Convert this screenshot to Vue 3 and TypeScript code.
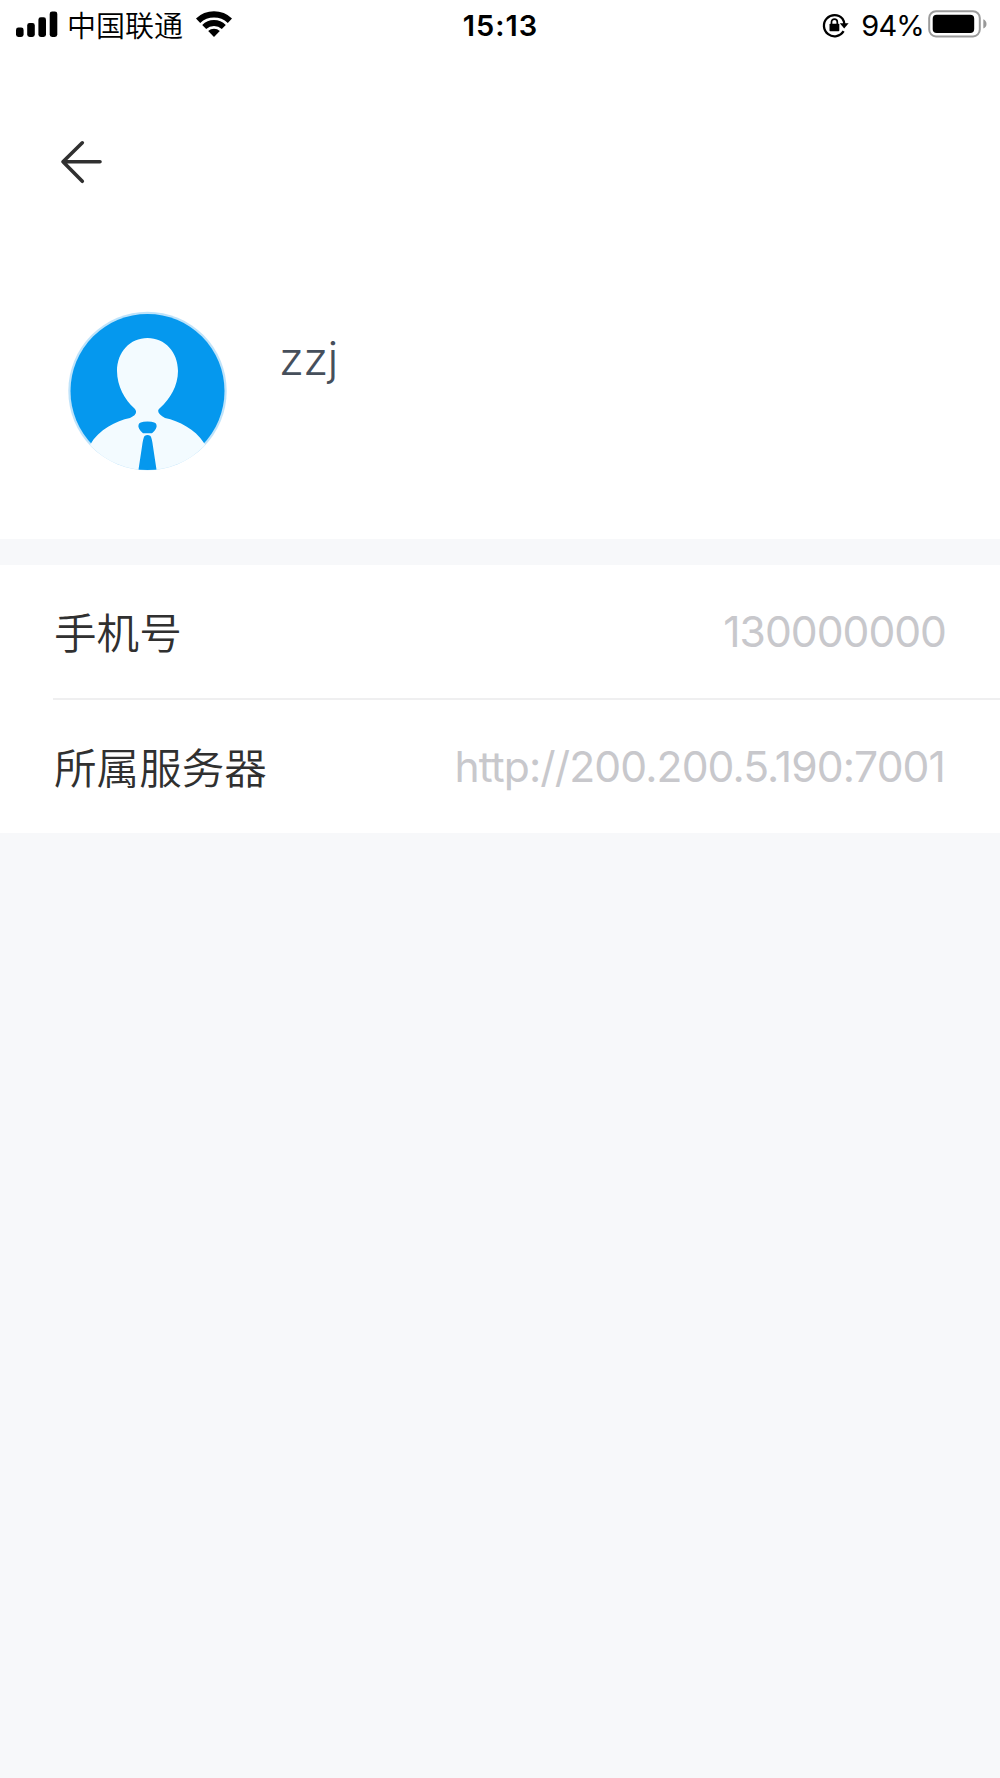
<script setup lang="ts">
interface InfoRow {
  key: string
  label: string
  value: string
}

const carrier = '中国联通'
const time = '15:13'
const battery = '94%'
const userName = 'zzj'

const rows: InfoRow[] = [
  { key: 'phone', label: '手机号', value: '130000000' },
  { key: 'server', label: '所属服务器', value: 'http://200.200.5.190:7001' },
]
</script>

<template>
  <div class="page">
    <header class="status">
      <div class="status-left">
        <svg class="signal" width="42" height="27" viewBox="0 0 42 27">
          <rect x="0" y="16.5" width="7.6" height="9.5" rx="2.4" />
          <rect x="11.2" y="12" width="7.6" height="14" rx="2.4" />
          <rect x="22.4" y="6.3" width="7.6" height="19.7" rx="2.4" />
          <rect x="33.7" y="0.5" width="7.6" height="25.5" rx="2.4" />
        </svg>
        <span class="carrier">{{ carrier }}</span>
        <svg class="wifi" width="38" height="28" viewBox="0 0 38 28">
          <path d="M1 8.6A25.5 25.5 0 0 1 37 8.6L32.8 12.9A20 20 0 0 0 5.2 12.9Z" />
          <path d="M7.2 14.9A16.8 16.8 0 0 1 30.8 14.9L26.8 19A11.6 11.6 0 0 0 11.2 19Z" />
          <path d="M13.2 21A8.3 8.3 0 0 1 24.8 21L19 27Z" />
        </svg>
      </div>
      <span class="time">{{ time }}</span>
      <div class="status-right">
        <svg class="lock" width="27" height="26" viewBox="0 0 27 26">
          <path d="M21.6 18.2A10.6 10.6 0 1 1 20.5 5.7Q22.3 8 22.3 11.5" fill="none" stroke="#000" stroke-width="2.3" />
          <path d="M17.8 10.2H26.6L22.2 15.4Z" />
          <rect x="7.5" y="10.8" width="9.8" height="7.4" rx="0.8" />
          <path d="M9.5 11.5V9a2.9 2.9 0 0 1 5.8 0V11.5" fill="none" stroke="#000" stroke-width="1.7" />
        </svg>
        <span class="percent">{{ battery }}</span>
        <svg class="battery" width="60" height="28" viewBox="0 0 60 28">
          <rect x="1.2" y="1.2" width="50.6" height="25.2" rx="6.8" fill="none" stroke="#9b9b9b" stroke-width="2" />
          <rect x="4.7" y="4.8" width="41.5" height="18.2" rx="4" />
          <path d="M55.3 9.3Q58.5 10.8 58.5 13.9T55.3 18.6Z" fill="#999" />
        </svg>
      </div>
    </header>

    <nav class="nav">
      <svg class="back" width="42" height="44" viewBox="0 0 42 44">
        <path d="M22.3 2.8L3 21.8L22.3 41.3M3 21.8H40" fill="none" stroke="#303030" stroke-width="3.6" stroke-linecap="round" stroke-linejoin="round" />
      </svg>
    </nav>

    <section class="profile">
      <svg class="avatar" width="160" height="160" viewBox="0 0 160 160">
        <defs>
          <clipPath id="avatar-clip"><circle cx="79.5" cy="80" r="79" /></clipPath>
        </defs>
        <circle cx="79.5" cy="80" r="79.2" fill="#bfe3fa" />
        <circle cx="79.5" cy="80" r="77" fill="#0598ee" />
        <g clip-path="url(#avatar-clip)" fill="#f3fbff">
          <path d="M79.5 27C62 27 49 41 49 60C49 75 57 89 66 97C70 101 68 104 62 107C48 110 31 118 22 134L12 150V164H148V150L136 132C127 118 111 110 97 107C91 104 88 100 92 97C102 88 110 75 110 60C110 41 97 27 79.5 27Z" />
          <path d="M70.5 114Q70.5 110.5 79.5 110.5T88.5 114Q89.5 117.5 84 122.3H75Q69.5 117.5 70.5 114Z" fill="#0598ee" />
          <path d="M76.5 125Q79.5 123 82.5 125Q84 127.5 85 135.5L88.7 160H70.3L74 135.5Q75 127.5 76.5 125Z" fill="#0598ee" />
        </g>
      </svg>
      <h1 class="name">{{ userName }}</h1>
    </section>

    <main class="info">
      <div v-for="row in rows" :key="row.key" class="row">
        <span class="label">{{ row.label }}</span>
        <span class="value" :class="row.key">{{ row.value }}</span>
      </div>
    </main>
  </div>
</template>

<style>
body {
  margin: 0;
  background: #f7f8fa;
}
</style>

<style scoped>
.page {
  min-height: 1778px;
  background: #f7f8fa;
  font-family: Inter, "Noto Sans CJK SC", sans-serif;
  color: #303030;
}

.status {
  display: grid;
  grid-template-columns: 1fr auto 1fr;
  align-items: start;
  box-sizing: border-box;
  height: 50px;
  padding: 0 12px 0 16px;
  background: #fff;
  color: #000;
  line-height: 48px;
}

.status svg {
  display: block;
  flex: none;
}

.status-left,
.status-right {
  display: flex;
  align-items: center;
  height: 48px;
}

.status-right {
  justify-content: flex-end;
}

.signal {
  margin-top: 1px;
}

.carrier {
  margin-left: 9px;
  padding-top: 5px;
  font-size: 29px;
  font-weight: 350;
}

.wifi {
  margin: 0 0 1px 12px;
}

.time {
  padding: 2px 3px 0 0;
  font-size: 29px;
  font-weight: 600;
  letter-spacing: 1px;
}

.percent {
  margin: 0 4px 0 12px;
  padding-top: 3px;
  font-size: 29px;
  letter-spacing: -0.8px;
}

.lock {
  margin-top: 3px;
}

.nav {
  display: flex;
  align-items: center;
  height: 224px;
  padding-left: 60px;
  background: #fff;
}

.profile {
  display: flex;
  box-sizing: border-box;
  height: 265px;
  padding: 37px 0 0 68px;
  background: #fff;
}

.name {
  margin: 17px 0 0 51px;
  font-size: 46px;
  font-weight: 300;
  line-height: 60px;
  letter-spacing: -0.7px;
  color: #464f5b;
}

.info {
  margin-top: 26px;
  background: #fff;
}

.row {
  display: flex;
  align-items: center;
  justify-content: space-between;
  box-sizing: border-box;
  height: 133px;
  margin-left: 53px;
  padding-right: 53px;
}

.row + .row {
  height: 135px;
  border-top: 2px solid #efeff0;
}

.label {
  padding: 0 0 3px 1px;
  font-size: 42.6px;
  font-weight: 350;
}

.value {
  padding: 0 1px 0 0;
  font-size: 42.6px;
  letter-spacing: -1px;
  color: #c8c8cc;
}

.server {
  padding-right: 2px;
  letter-spacing: -0.9px;
}
</style>
